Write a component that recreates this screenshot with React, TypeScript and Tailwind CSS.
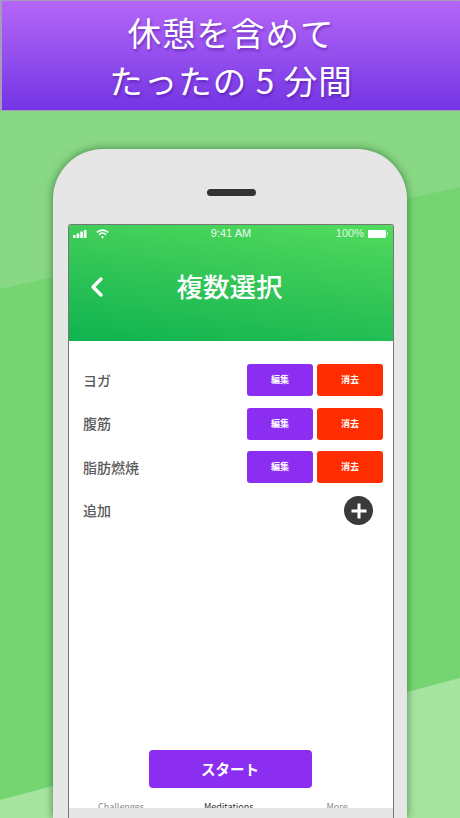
const font = { fontFamily: '"Noto Sans CJK JP", sans-serif' };

function Row({ label }: { label: string }) {
  return (
    <div className="flex h-[32px] items-center">
      <span className="flex-1 pl-[14px] text-[14px] font-medium text-[#5a5a5a]">{label}</span>
      <button className="h-[32px] w-[66px] rounded-[3px] bg-[#8b2ef2] text-[9px] font-bold text-white">編集</button>
      <button className="ml-[4px] mr-[10px] h-[32px] w-[66px] rounded-[3px] bg-[#ff2d00] text-[9px] font-bold text-white">消去</button>
    </div>
  );
}

export default function App() {
  return (
    <div className="relative h-[818px] w-[460px] overflow-hidden bg-[#88d885]" style={font}>
      <svg className="absolute inset-0" width="460" height="818" viewBox="0 0 460 818">
        <path d="M0 289 L460 187 L460 678 L0 800 Z" fill="#75d571" />
        <path d="M0 800 L460 678 L460 818 L0 818 Z" fill="#a6e5a0" />
      </svg>
      <div className="relative">
        <header className="flex h-[111px] flex-col items-center border-b border-l-2 border-t border-[#a69bb8] bg-gradient-to-b from-[#b565f7] to-[#7533e4] pt-[7px] text-[33.5px] font-normal leading-[48px] tracking-[1px] text-white [text-shadow:1px_2px_3px_rgba(50,0,120,0.45)]">
          <div>休憩を含めて</div>
          <div>たったの 5 分間</div>
        </header>
        <div className="mx-auto mt-[38px] flex h-[669px] w-[354px] flex-col rounded-t-[50px] bg-[#e6e6e6] pl-[15px] pr-[13px] shadow-[0_0_8px_rgba(30,80,30,0.65)]">
          <div className="flex h-[75px] items-start justify-center pt-[40px]">
            <div className="h-[7px] w-[49px] rounded-full bg-[#333333]" />
          </div>
          <div className="flex flex-1 flex-col overflow-hidden rounded-t-[3px] border-x border-t border-[#777777] bg-white">
            <div className="h-[116px] bg-[linear-gradient(188deg,#52dc5e_0%,#3ccb58_35%,#0fb350_100%)] text-white">
              <div className="flex h-[17px] items-center justify-between px-[4px] text-[11px]" style={{ fontFamily: '"Liberation Sans", sans-serif' }}>
                <div className="flex w-[100px] items-center gap-[8px]">
                  <svg width="15" height="8" viewBox="0 0 15 8" fill="white">
                    <rect x="0" y="5" width="2.7" height="3" rx=".5" />
                    <rect x="3.6" y="3.5" width="2.7" height="4.5" rx=".5" />
                    <rect x="7.2" y="1.6" width="2.7" height="6.4" rx=".5" />
                    <rect x="10.8" y="0" width="2.7" height="8" rx=".5" />
                  </svg>
                  <svg width="13" height="10" viewBox="0 0 12 9" fill="none" stroke="white" strokeWidth="1.5">
                    <path d="M.8 3A7.5 7.5 0 0 1 11.2 3" />
                    <path d="M2.8 5A4.6 4.6 0 0 1 9.2 5" />
                    <path d="M6 8.8 4.6 7A2 2 0 0 1 7.4 7Z" fill="white" stroke="none" />
                  </svg>
                </div>
                <span className="text-white/90">9:41 AM</span>
                <div className="flex w-[100px] items-center justify-end gap-[4px] pr-[1px]">
                  <span className="text-white/80">100%</span>
                  <div className="h-[8px] w-[18px] rounded-[1px] bg-white" />
                  <div className="-ml-[3px] h-[3px] w-[1px] bg-white/60" />
                </div>
              </div>
              <div className="relative flex h-[88px] items-center justify-center pr-[3px] text-[26.5px] font-medium">
                <svg className="absolute left-[21px] top-[34px]" width="14" height="22" viewBox="0 0 14 22" fill="none" stroke="white" strokeWidth="3.4" strokeLinecap="round" strokeLinejoin="round">
                  <path d="M11 3 3 11l8 8" />
                </svg>
                複数選択
              </div>
            </div>
            <div className="flex flex-1 flex-col">
              <div className="flex flex-col gap-[11.5px] pt-[23px]">
                <Row label="ヨガ" />
                <Row label="腹筋" />
                <Row label="脂肪燃焼" />
                <div className="flex h-[32px] items-center">
                  <span className="flex-1 pl-[14px] text-[14px] font-medium text-[#5a5a5a]">追加</span>
                  <div className="mr-[20px] flex h-[29px] w-[29px] items-center justify-center rounded-full bg-[#3a3a3a]">
                    <svg width="18" height="18" viewBox="0 0 18 18" stroke="white" strokeWidth="3">
                      <path d="M9 1.5v15M1.5 9h15" />
                    </svg>
                  </div>
                </div>
              </div>
              <div className="flex-1" />
              <div className="flex justify-center">
                <button className="mb-[14px] mr-[2px] h-[38px] w-[163px] rounded-[4px] bg-[#8b2ef2] text-[14.5px] font-bold text-white">スタート</button>
              </div>
              <div className="flex h-[6px] items-start overflow-hidden text-[9px] leading-[9px] text-[#888888]">
                <span className="ml-[29px]">Challenges</span>
                <span className="ml-[60px] text-[#333333]">Meditations</span>
                <span className="ml-[73px]">More</span>
              </div>
            </div>
            <div className="h-[10px] bg-[#e6e6e6]" />
          </div>
        </div>
      </div>
    </div>
  );
}
